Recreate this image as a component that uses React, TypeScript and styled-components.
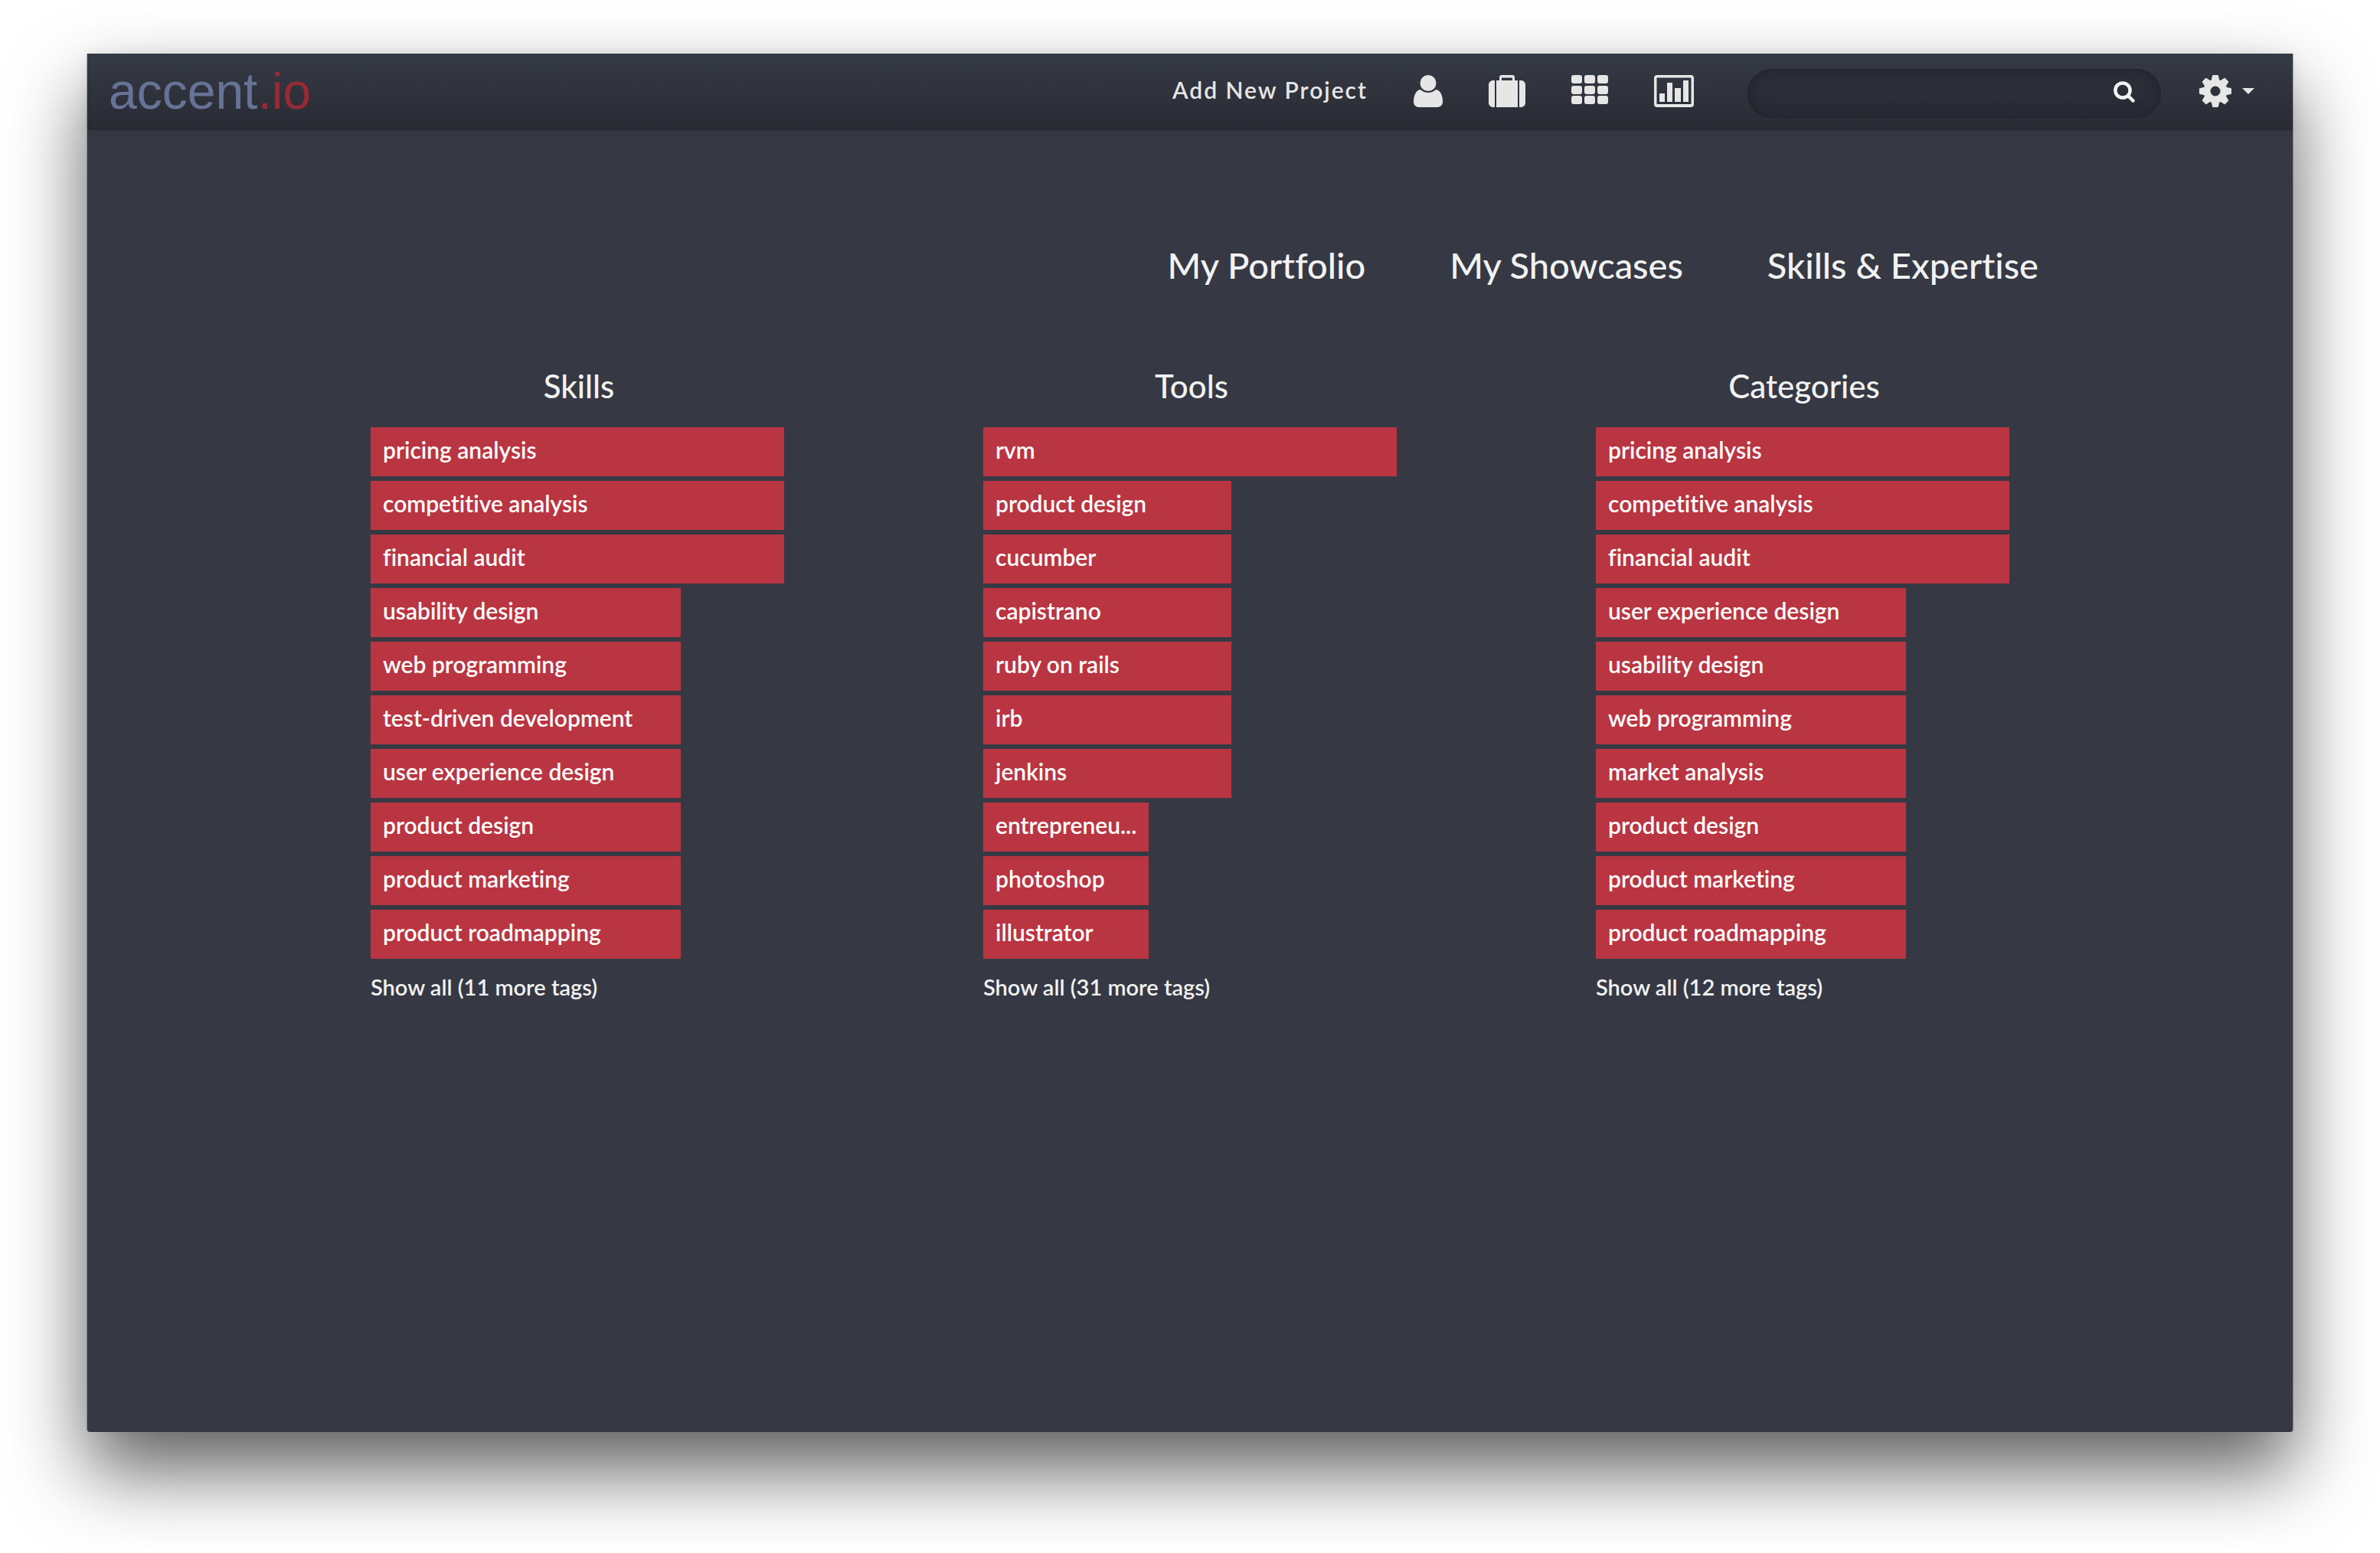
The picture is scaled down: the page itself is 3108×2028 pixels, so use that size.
import React, { useId } from "react";
import styled, { createGlobalStyle } from "styled-components";

const colors = {
  ground: "#363944",
  text: "#f2f2f2",
  icon: "#e6e6e6",
  bar: "#b93541",
  logo: "#667396",
  logoAccent: "#982a35",
};

const GlobalStyle = createGlobalStyle`
  *, *::before, *::after { box-sizing: border-box; }
  html, body { margin: 0; background: #fff; }
  body {
    font-family: Lato, "Open Sans", sans-serif;
    font-variant-ligatures: none;
    color: ${colors.text};
    overflow-x: hidden;
  }
  a { color: inherit; text-decoration: none; }
  h2, ul { margin: 0; padding: 0; }
  ul { list-style: none; }
  button { border: 0; padding: 0; background: none; color: inherit; font: inherit; cursor: pointer; }
  svg { display: block; fill: currentColor; }
`;

const Desktop = styled.div`
  display: flex;
  min-height: 100vh;
  padding: 70px 114px 158px;
`;

const Window = styled.div`
  flex: 1;
  display: flex;
  flex-direction: column;
  min-width: 0;
  background: ${colors.ground};
  border-radius: 0 0 4px 4px;
  box-shadow:
    1px 0 0 rgba(0, 0, 0, 0.25),
    -1px 0 0 rgba(0, 0, 0, 0.25),
    0 50px 100px rgba(0, 0, 0, 0.63);
`;

const TopBar = styled.header`
  display: flex;
  align-items: center;
  justify-content: space-between;
  height: 100px;
  padding: 0 50px 2px 28px;
  background: linear-gradient(#363a45, #292b33);
  box-shadow: 0 2px 16px rgba(0, 0, 0, 0.08);
`;

const Logo = styled.a`
  font-family: "Liberation Sans", Arial, sans-serif;
  font-size: 66px;
  line-height: 76px;
  color: ${colors.logo};
`;

const LogoSuffix = styled.span`
  color: ${colors.logoAccent};
`;

const Tools = styled.nav`
  display: flex;
  align-items: center;
  gap: 60px;
  color: ${colors.icon};
`;

const AddLink = styled.a`
  padding-bottom: 4px;
  font-size: 30px;
  font-weight: 600;
  line-height: 36px;
  letter-spacing: 2px;
  white-space: nowrap;
`;

const SearchBox = styled.form`
  display: flex;
  align-items: center;
  width: 540px;
  height: 64px;
  margin: 6px 0 0 10px;
  padding: 0 34px 4px 32px;
  border-radius: 32px;
  background: rgba(37, 39, 48, 0.4);
  box-shadow:
    inset 0 0 0 2px rgba(33, 34, 43, 0.35),
    inset 0 4px 20px rgba(28, 30, 37, 0.6);
  color: ${colors.text};
`;

const SearchInput = styled.input`
  flex: 1;
  min-width: 0;
  border: 0;
  outline: 0;
  background: transparent;
  color: inherit;
  font: inherit;
  font-size: 30px;
`;

const SettingsButton = styled.button`
  display: flex;
  align-items: center;
  gap: 14px;
  margin-left: -10px;
`;

const Main = styled.main`
  flex: 1;
  padding: 148px 100px 0;
`;

const SectionNav = styled.nav`
  display: flex;
  justify-content: flex-end;
  gap: 110px;
  max-width: 2216px;
  margin: 0 auto 102px;
  font-size: 47px;
  font-weight: 500;
  line-height: 56px;
  white-space: nowrap;
`;

const Columns = styled.div`
  display: grid;
  grid-template-columns: repeat(3, minmax(0, 540px));
  justify-content: space-between;
  max-width: 2140px;
  margin: 0 auto;
`;

const ColumnTitle = styled.h2`
  margin-bottom: 26px;
  padding-left: 4px;
  font-size: 42px;
  font-weight: 500;
  line-height: 56px;
  text-align: center;
`;

const TagList = styled.ul`
  display: grid;
  gap: 6px;
  margin-bottom: 20px;
`;

const Tag = styled.a`
  display: block;
  height: 64px;
  padding: 0 8px 0 16px;
  overflow: hidden;
  background: ${colors.bar};
  color: #fff;
  font-size: 30px;
  font-weight: 600;
  line-height: 58px;
  text-overflow: ellipsis;
  white-space: nowrap;
`;

const ShowAll = styled.button`
  display: block;
  font-size: 29px;
  font-weight: 600;
  line-height: 34px;
`;

const UserIcon = () => (
  <svg width="38" height="42" viewBox="0 0 38 42" aria-hidden="true">
    <circle cx="19" cy="10.5" r="10.5" />
    <path d="M9 19C3 19.500 0 27 0 35c0 4 3 7 7 7h24c4 0 7-3 7-7 0-8-3-15.500-9-16-3 2.600-6 4-10 4s-7-1.400-10-4z" />
  </svg>
);

const SuitcaseIcon = () => (
  <svg width="48" height="42" viewBox="0 0 48 42" aria-hidden="true">
    <path d="M8 7v35H6c-3.500 0-6-2.500-6-6V13c0-3.500 2.500-6 6-6zM40 7h2c3.500 0 6 2.500 6 6v23c0 3.500-2.500 6-6 6h-2z" />
    <path fillRule="evenodd" d="M10 7h4V3c0-2 1-3 3-3h14c2 0 3 1 3 3v4h4v35H10zM17 3.500V7h14V3.500z" />
  </svg>
);

const GridIcon = () => (
  <svg width="48" height="42" viewBox="0 0 48 42" aria-hidden="true">
    {[0, 14, 27].map((y) =>
      [0, 17, 34].map((x) => <rect key={`${x}-${y}`} x={x} y={y} width="14" height="11" rx="3" />)
    )}
  </svg>
);

const ChartIcon = () => (
  <svg width="52" height="42" viewBox="0 0 52 42" aria-hidden="true">
    <path
      fillRule="evenodd"
      d="M4 0h44c2.500 0 4 1.500 4 4v34c0 2.500-1.500 4-4 4H4c-2.500 0-4-1.500-4-4V4c0-2.500 1.500-4 4-4zM3.500 3.500v34.500h45V3.500z"
    />
    <path d="M7 24h7v11H7zM17 10h7v25h-7zM27 17h8v18h-8zM38 7h7v28h-7z" />
  </svg>
);

const SearchIcon = () => (
  <svg width="28" height="28" viewBox="0 0 28 28" aria-hidden="true">
    <g fill="none" stroke="currentColor" strokeWidth="4.500">
      <circle cx="12" cy="12" r="9.600" />
      <path d="M19 19l6.500 6.500" strokeLinecap="round" />
    </g>
  </svg>
);

const CogIcon = () => (
  <svg width="42" height="42" viewBox="0 0 42 42" aria-hidden="true">
    <circle cx="21" cy="21" r="11" fill="none" stroke="currentColor" strokeWidth="9" />
    {[0, 45, 90, 135, 180, 225, 270, 315].map((angle) => (
      <path key={angle} d="M15.500 8L17 1.200Q17.200 0 18 0h6Q24.800 0 25 1.200L26.500 8z" transform={`rotate(${angle} 21 21)`} />
    ))}
  </svg>
);

const CaretIcon = () => (
  <svg width="16" height="8" viewBox="0 0 16 8" aria-hidden="true">
    <path d="M0 0h16L8 8z" />
  </svg>
);

type TagData = [name: string, share: number];

const columns: { title: string; tags: TagData[]; more: number }[] = [
  {
    title: "Skills",
    more: 11,
    tags: [
      ["pricing analysis", 100],
      ["competitive analysis", 100],
      ["financial audit", 100],
      ["usability design", 75],
      ["web programming", 75],
      ["test-driven development", 75],
      ["user experience design", 75],
      ["product design", 75],
      ["product marketing", 75],
      ["product roadmapping", 75],
    ],
  },
  {
    title: "Tools",
    more: 31,
    tags: [
      ["rvm", 100],
      ["product design", 60],
      ["cucumber", 60],
      ["capistrano", 60],
      ["ruby on rails", 60],
      ["irb", 60],
      ["jenkins", 60],
      ["entrepreneu...", 40],
      ["photoshop", 40],
      ["illustrator", 40],
    ],
  },
  {
    title: "Categories",
    more: 12,
    tags: [
      ["pricing analysis", 100],
      ["competitive analysis", 100],
      ["financial audit", 100],
      ["user experience design", 75],
      ["usability design", 75],
      ["web programming", 75],
      ["market analysis", 75],
      ["product design", 75],
      ["product marketing", 75],
      ["product roadmapping", 75],
    ],
  },
];

export default function App() {
  const searchId = useId();

  return (
    <>
      <GlobalStyle />
      <Desktop>
        <Window>
          <TopBar>
            <Logo href="#">
              accent<LogoSuffix>.io</LogoSuffix>
            </Logo>
            <Tools>
              <AddLink href="#new">Add New Project</AddLink>
              <a href="#profile" aria-label="Profile"><UserIcon /></a>
              <a href="#portfolio" aria-label="Portfolio"><SuitcaseIcon /></a>
              <a href="#showcases" aria-label="Showcases"><GridIcon /></a>
              <a href="#skills" aria-label="Skills"><ChartIcon /></a>
              <SearchBox role="search" onSubmit={(e) => e.preventDefault()}>
                <SearchInput id={searchId} type="text" aria-label="Search" />
                <button type="submit" aria-label="Search"><SearchIcon /></button>
              </SearchBox>
              <SettingsButton type="button" aria-label="Settings">
                <CogIcon />
                <CaretIcon />
              </SettingsButton>
            </Tools>
          </TopBar>
          <Main>
            <SectionNav>
              <a href="#portfolio">My Portfolio</a>
              <a href="#showcases">My Showcases</a>
              <a href="#skills">Skills &amp; Expertise</a>
            </SectionNav>
            <Columns>
              {columns.map(({ title, tags, more }) => (
                <section key={title}>
                  <ColumnTitle>{title}</ColumnTitle>
                  <TagList>
                    {tags.map(([name, share]) => (
                      <li key={name}>
                        <Tag href="#tag" style={{ width: `${share}%` }}>{name}</Tag>
                      </li>
                    ))}
                  </TagList>
                  <ShowAll type="button">Show all ({more} more tags)</ShowAll>
                </section>
              ))}
            </Columns>
          </Main>
        </Window>
      </Desktop>
    </>
  );
}
